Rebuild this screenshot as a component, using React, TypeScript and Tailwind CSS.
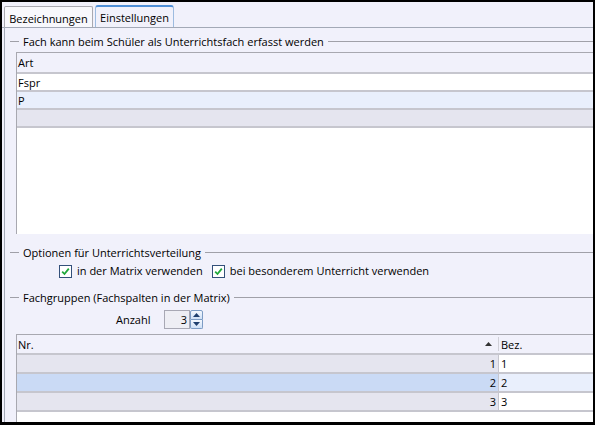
import React from 'react';

const font = "font-['Segoe_UI','Open_Sans',sans-serif]";

function GroupHeader({ title }: { title: string }) {
  return (
    <div className="flex items-center h-[14px] pl-[5px]">
      <div className="w-[9px] h-px bg-[#a0a0a8]" />
      <span className="px-[4px] leading-none whitespace-nowrap">{title}</span>
      <div className="flex-1 h-px bg-[#a0a0a8]" />
    </div>
  );
}

function CheckBox({ label }: { label: string }) {
  return (
    <label className="flex items-center gap-[5px]">
      <span className="w-[13px] h-[13px] border border-[#33507a] bg-white flex items-center justify-center">
        <svg width="9" height="9" viewBox="0 0 9 9">
          <path d="M1.2 4.6 L3.5 7 L7.8 1.6" fill="none" stroke="#1fa83a" strokeWidth="1.8" />
        </svg>
      </span>
      <span className="whitespace-nowrap">{label}</span>
    </label>
  );
}

function Spinner({ value }: { value: number }) {
  return (
    <div className="flex h-[19px]">
      <div className="w-[26px] h-full border border-[#a8a8b4] bg-[#eeeef4] flex items-center justify-end pr-[2px] leading-none">
        {value}
      </div>
      <div className="flex flex-col w-[13px] h-full">
        <div className="flex-1 border border-[#7d9cc4] rounded-t-[2px] bg-gradient-to-b from-[#f4f8fe] to-[#cfe0f6] flex items-center justify-center">
          <svg width="7" height="4" viewBox="0 0 7 4">
            <path d="M0 4 L3.5 0 L7 4 Z" fill="#1f3f6e" />
          </svg>
        </div>
        <div className="flex-1 border border-t-0 border-[#7d9cc4] rounded-b-[2px] bg-gradient-to-b from-[#f4f8fe] to-[#cfe0f6] flex items-center justify-center">
          <svg width="7" height="4" viewBox="0 0 7 4">
            <path d="M0 0 L7 0 L3.5 4 Z" fill="#1f3f6e" />
          </svg>
        </div>
      </div>
    </div>
  );
}

export default function App() {
  const artRows = [
    { text: 'Fspr', bg: 'bg-white' },
    { text: 'P', bg: 'bg-[#e9effc]' },
    { text: '', bg: 'bg-[#e5e5ef]' },
  ];
  const groups = [
    { nr: 1, bez: '1', sel: false },
    { nr: 2, bez: '2', sel: true },
    { nr: 3, bez: '3', sel: false },
  ];

  return (
    <div className={`w-[595px] h-[425px] bg-black pt-[2px] pl-[2px] pr-[2px] pb-[3px] ${font} text-[11px] text-black`}>
      <div className="h-full bg-[#f1f1fb] overflow-hidden flex flex-col">
        {/* Tabs */}
        <div className="h-[26px] shrink-0 flex items-end pl-[2px] gap-[2px] border-b border-[#a3a9b6]">
          <div className="h-[21px] w-[89px] border border-b-0 border-[#a9a9b0] bg-[#f8f8fc] rounded-t-[2px] flex items-center justify-center leading-none pt-[2px]">
            Bezeichnungen
          </div>
          <div className="h-[22px] w-[79px] border border-b-0 border-[#9dbbe0] border-t-2 border-t-[#4f8fd6] bg-[#f1f1fb] rounded-t-[3px] flex items-center justify-center leading-none">
            Einstellungen
          </div>
        </div>

        {/* Panel */}
        <div className="flex-1 ml-[2px] border-l border-[#a3a9b6] flex flex-col min-h-0">
          <div className="mt-[6px]">
            <GroupHeader title="Fach kann beim Schüler als Unterrichtsfach erfasst werden" />
          </div>

          {/* Art grid */}
          <div className="mt-[4px] ml-[11px] h-[182px] shrink-0 border-t border-l border-[#a8a8b0] bg-white flex flex-col">
            <div className="h-[21px] shrink-0 bg-[#f1f1fb] border-b-2 border-[#c6c6ce] flex items-center pl-[1px] leading-none">
              Art
            </div>
            {artRows.map((r, i) => (
              <div key={i} className={`h-[18px] shrink-0 ${r.bg} border-b-2 border-[#c6c6ce] flex items-center pl-[1px] leading-none`}>
                {r.text}
              </div>
            ))}
          </div>

          <div className="mt-[11px]">
            <GroupHeader title="Optionen für Unterrichtsverteilung" />
          </div>
          <div className="mt-[5px] ml-[54px] flex items-center gap-[9px] h-[14px]">
            <CheckBox label="in der Matrix verwenden" />
            <CheckBox label="bei besonderem Unterricht verwenden" />
          </div>

          <div className="mt-[12px]">
            <GroupHeader title="Fachgruppen (Fachspalten in der Matrix)" />
          </div>
          <div className="mt-[6px] ml-[111px] flex items-center h-[19px]">
            <span className="w-[48px] leading-none">Anzahl</span>
            <Spinner value={3} />
          </div>

          {/* Fachgruppen grid */}
          <div className="mt-[5px] ml-[11px] flex-1 border-t border-l border-[#a8a8b0] bg-white flex flex-col">
            <div className="h-[20px] shrink-0 bg-[#f1f1fb] border-b-2 border-[#c6c6ce] flex leading-none">
              <div className="w-[481px] flex items-center pl-[1px] relative">
                Nr.
                <svg className="absolute right-[6px] top-[7px]" width="7" height="4" viewBox="0 0 7 4">
                  <path d="M0 4 L3.5 0 L7 4 Z" fill="#333" />
                </svg>
              </div>
              <div className="w-px my-[2px] bg-[#d0d0d8]" />
              <div className="flex-1 flex items-center pl-[2px]">Bez.</div>
            </div>
            {groups.map((g) => (
              <div key={g.nr} className="h-[19px] shrink-0 border-b-2 border-[#c6c6ce] flex leading-none">
                <div className={`w-[481px] flex items-center justify-end pr-[2px] ${g.sel ? 'bg-[#cadaf5]' : 'bg-[#e5e5ef]'}`}>
                  {g.nr}
                </div>
                <div className="w-px bg-[#c6c6ce]" />
                <div className={`flex-1 flex items-center pl-[2px] ${g.sel ? 'bg-[#e9effc]' : 'bg-white'}`}>
                  {g.bez}
                </div>
              </div>
            ))}
          </div>
        </div>
      </div>
    </div>
  );
}
